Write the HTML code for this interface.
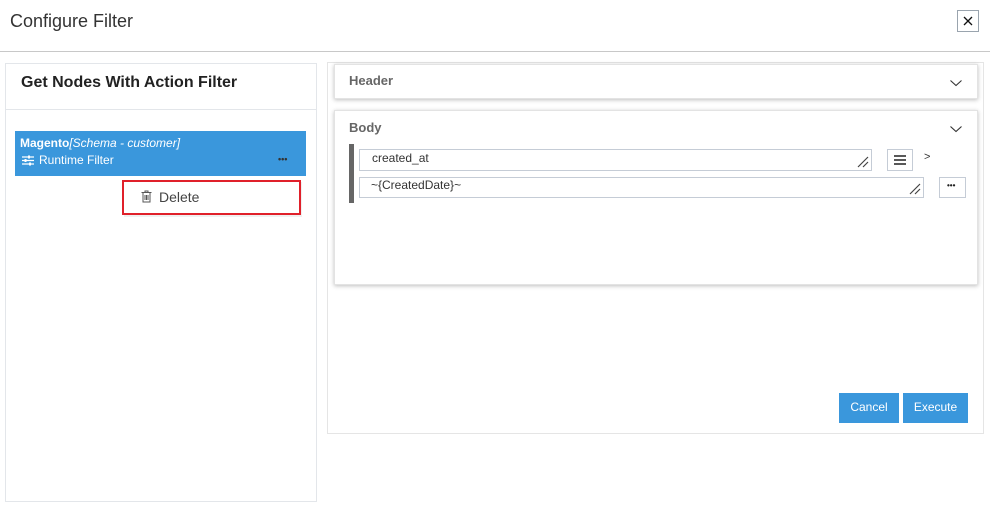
<!DOCTYPE html>
<html><head><meta charset="utf-8"><style>
*{box-sizing:border-box;margin:0;padding:0}
body{width:990px;height:531px;background:#fff;font-family:"Liberation Sans",sans-serif;position:relative;overflow:hidden}
.a{position:absolute}
.t{position:absolute;white-space:nowrap;line-height:1}
.inp{position:absolute;border:1px solid #c5ccd6;background:#fff}
.grip{position:absolute;right:2px;bottom:2px;width:12px;height:12px}
.card{position:absolute;background:#fff;border:1px solid #e3e3e3;box-shadow:0 1px 4px rgba(0,0,0,.25)}
.btn{position:absolute;background:#3a97dc;color:#fff;font-size:12px;text-align:center;line-height:29px}
.chev{position:absolute;width:14px;height:8px}
</style></head><body>
<div class="t" style="left:10px;top:12px;font-size:18px;color:#333">Configure Filter</div>
<div class="a" style="left:957px;top:10px;width:22px;height:22px;border:1px solid #9aa4ae"></div>
<svg class="a" style="left:963px;top:16px" width="10" height="10"><path d="M1 1L9 9M9 1L1 9" stroke="#111" stroke-width="1.3"/></svg>
<div class="a" style="left:0;top:51px;width:990px;height:1px;background:#c8c8c8"></div>

<div class="a" style="left:5px;top:63px;width:312px;height:439px;border:1px solid #e3e6ea"></div>
<div class="a" style="left:5px;top:109px;width:312px;height:1px;background:#e3e6ea"></div>
<div class="t" style="left:21px;top:75px;font-size:16px;font-weight:bold;color:#222">Get Nodes With Action Filter</div>

<div class="a" style="left:15px;top:131px;width:291px;height:45px;background:#3a97dc"></div>
<div class="t" style="left:20px;top:137px;font-size:12px;color:#fff"><b>Magento</b><i>[Schema - customer]</i></div>
<svg class="a" style="left:22px;top:155px" width="12" height="11"><path d="M0 2h12M0 5.5h12M0 9h12" stroke="#fff" stroke-width="1.2"/><rect x="6" y="0.5" width="2" height="3" fill="#fff"/><rect x="2.5" y="4" width="2" height="3" fill="#fff"/><rect x="7" y="7.5" width="2" height="3" fill="#fff"/></svg>
<div class="t" style="left:39px;top:154px;font-size:12px;color:#fff">Runtime Filter</div>
<div class="t" style="left:278px;top:155px;font-size:9px;color:#333;font-weight:bold">•••</div>

<div class="a" style="left:124px;top:182px;width:178px;height:35px;background:#f0f0f0"></div>
<div class="a" style="left:122px;top:180px;width:179px;height:35px;border:2px solid #e0202a;background:#fff"></div>
<svg class="a" style="left:141px;top:190px" width="11" height="13"><path d="M0.5 2.5h10M4 2.5V1h3v1.5M2 3v9h7V3M4 5v5M5.5 5v5M7 5v5" stroke="#555" fill="none" stroke-width="1"/></svg>
<div class="t" style="left:159px;top:190px;font-size:14px;color:#444">Delete</div>

<div class="a" style="left:327px;top:62px;width:657px;height:372px;border:1px solid #e5e5e5"></div>
<div class="card" style="left:334px;top:64px;width:644px;height:35px"></div>
<div class="t" style="left:349px;top:74px;font-size:13px;font-weight:bold;color:#666">Header</div>
<svg class="chev" style="left:949px;top:79px"><path d="M1.5 1.5l5.5 5L12.5 1.5" stroke="#333" fill="none" stroke-width="1.1"/></svg>

<div class="card" style="left:334px;top:110px;width:644px;height:175px"></div>
<div class="t" style="left:349px;top:121px;font-size:13px;font-weight:bold;color:#666">Body</div>
<svg class="chev" style="left:949px;top:125px"><path d="M1.5 1.5l5.5 5L12.5 1.5" stroke="#333" fill="none" stroke-width="1.1"/></svg>
<div class="a" style="left:349px;top:144px;width:5px;height:59px;background:#666"></div>
<div class="inp" style="left:359px;top:149px;width:513px;height:22px"><svg class="grip"><path d="M11 1L1 11M11 6L6 11" stroke="#444" stroke-width="1.2"/></svg></div>
<div class="t" style="left:372px;top:152px;font-size:12px;color:#333">created_at</div>
<div class="inp" style="left:359px;top:177px;width:565px;height:21px"><svg class="grip"><path d="M11 1L1 11M11 6L6 11" stroke="#444" stroke-width="1.2"/></svg></div>
<div class="t" style="left:371px;top:179px;font-size:12px;color:#333">~{CreatedDate}~</div>
<div class="a" style="left:887px;top:149px;width:26px;height:22px;border:1px solid #c5ccd6"></div>
<svg class="a" style="left:894px;top:155px" width="12" height="10"><path d="M0 1h12M0 5h12M0 9h12" stroke="#222" stroke-width="1.6"/></svg>
<div class="t" style="left:924px;top:152px;font-size:11px;color:#333">&gt;</div>
<div class="a" style="left:939px;top:177px;width:27px;height:21px;border:1px solid #c5ccd6"></div>
<div class="t" style="left:947px;top:182px;font-size:8px;color:#222;font-weight:bold">•••</div>

<div class="btn" style="left:839px;top:393px;width:60px;height:30px">Cancel</div>
<div class="btn" style="left:903px;top:393px;width:65px;height:30px">Execute</div>
</body></html>
